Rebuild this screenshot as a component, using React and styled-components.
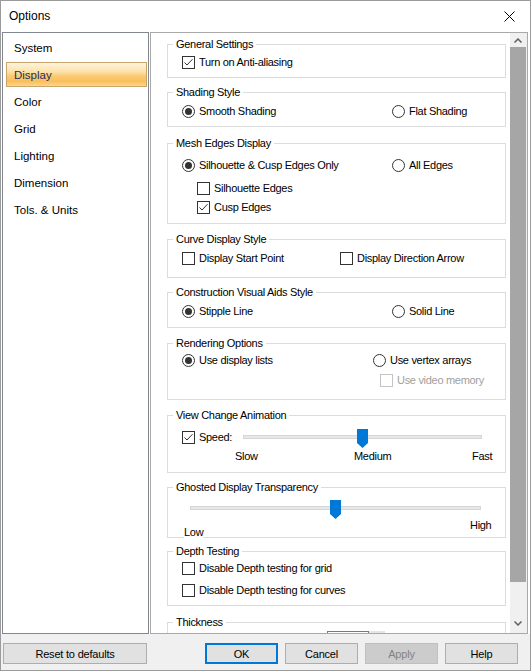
import React from "react";
import styled, { createGlobalStyle } from "styled-components";

const GlobalStyle = createGlobalStyle`
  html, body {
    margin: 0;
    padding: 0;
    background: #ffffff;
  }
  body {
    font-family: "Liberation Sans", Arial, sans-serif;
  }
`;

// whole dialog frame
const Window = styled.div`
  width: 531px;
  height: 671px;
  box-sizing: border-box;
  border: 1px solid #9b9b9b;
  background: #ffffff;
  display: flex;
  flex-direction: column;
  overflow: hidden;
`;

const TitleBar = styled.div`
  height: 30px;
  flex: none;
  display: flex;
  align-items: center;
  justify-content: space-between;
  padding: 0 15px 0 8px;
  font-size: 12px;
  color: #000;
`;

const Body = styled.div`
  height: 603px;
  flex: none;
  display: flex;
  box-sizing: border-box;
  padding: 1px 0 0 1px;
`;

// left category list
const NavList = styled.div`
  width: 147px;
  height: 602px;
  box-sizing: border-box;
  border: 1px solid #828790;
  padding: 2px 0 0 3px;
  display: flex;
  flex-direction: column;
  gap: 2px;
`;

const NavItem = styled.div`
  height: 25px;
  width: 141px;
  box-sizing: border-box;
  display: flex;
  align-items: center;
  padding-left: 7px;
  font-size: 11.5px;
  border: 1px solid ${(p) => (p.$active ? "#c9a46b" : "transparent")};
  color: ${(p) => (p.$active ? "#1b2f5b" : "#000")};
  background: ${(p) =>
    p.$active
      ? "linear-gradient(to bottom, #fff4de 0%, #fde0a6 40%, #fccb74 55%, #fbbf5a 80%, #fdd58e 100%)"
      : "transparent"};
`;

// right scrolling settings panel
const Panel = styled.div`
  margin-left: 1px;
  width: 378px;
  height: 602px;
  box-sizing: border-box;
  border: 1px solid #a9a9a9;
  display: flex;
  overflow: hidden;
`;

const Content = styled.div`
  flex: 1;
  overflow: hidden;
  padding: 0 0 0 16px;
`;

const Group = styled.div`
  position: relative;
  width: 339px;
  height: ${(p) => p.$h}px;
  margin-top: ${(p) => p.$mt}px;
  box-sizing: border-box;
  border: 1px solid #dcdcdc;
  padding: ${(p) => p.$pt}px 0 0 14px;
  font-size: 11px;
  letter-spacing: -0.3px;
  color: #000;
`;

const Legend = styled.div`
  position: absolute;
  top: -7px;
  left: 5px;
  padding: 0 3px;
  background: #fff;
  line-height: 13px;
  font-size: 11px;
`;

const Row = styled.div`
  display: grid;
  grid-template-columns: ${(p) => (p.$c1 ? `${p.$c1}px auto` : "auto")};
  justify-content: start;
  align-items: center;
  margin-top: ${(p) => p.$mt || 0}px;
  margin-left: ${(p) => p.$ml || 0}px;
  height: 13px;
`;

const Option = styled.label`
  display: flex;
  align-items: center;
  gap: 4px;
  line-height: 13px;
  white-space: nowrap;
  color: ${(p) => (p.$disabled ? "#a0a0a0" : "#000")};
`;

const Box = styled.span`
  width: 13px;
  height: 13px;
  box-sizing: border-box;
  border: 1px solid ${(p) => (p.$disabled ? "#c4c4c4" : "#333")};
  background: #fff;
  display: flex;
  align-items: center;
  justify-content: center;
  flex: none;
`;

const Circle = styled.span`
  width: 13px;
  height: 13px;
  box-sizing: border-box;
  border: 1px solid #333;
  border-radius: 50%;
  background: #fff;
  display: flex;
  align-items: center;
  justify-content: center;
  flex: none;
  &::after {
    content: "";
    width: 7px;
    height: 7px;
    border-radius: 50%;
    background: ${(p) => (p.$on ? "#333" : "transparent")};
  }
`;

const Check = ({ on, disabled, children }) => (
  <Option $disabled={disabled}>
    <Box $disabled={disabled}>
      {on && (
        <svg width="11" height="11" viewBox="0 0 11 11">
          <polyline points="1.5,5.5 4,8 9.5,2.2" fill="none" stroke="#333" strokeWidth="1" />
        </svg>
      )}
    </Box>
    {children}
  </Option>
);

const Radio = ({ on, children }) => (
  <Option>
    <Circle $on={on} />
    {children}
  </Option>
);

// slider
const Slider = styled.div`
  position: relative;
  width: ${(p) => p.$w}px;
  height: ${(p) => p.$h}px;
  margin-left: ${(p) => p.$ml || 0}px;
`;

const Track = styled.div`
  position: absolute;
  left: 0;
  right: 0;
  top: ${(p) => p.$top}px;
  height: 4px;
  box-sizing: border-box;
  background: #e7e7e7;
  border: 1px solid #d6d6d6;
`;

const Thumb = styled.svg`
  position: absolute;
  top: ${(p) => p.$top}px;
  left: calc(${(p) => p.$pos}% - 5.5px);
`;

const SliderRow = styled.div`
  display: flex;
  margin-top: ${(p) => p.$mt || 0}px;
`;

const Ticks = styled.div`
  display: grid;
  grid-template-columns: ${(p) => p.$cols};
  align-items: start;
  margin-top: ${(p) => p.$mt || 0}px;
  margin-left: ${(p) => p.$ml || 0}px;
  line-height: 13px;
`;

const Tick = styled.span`
  margin-top: ${(p) => p.$mt || 0}px;
  background: #fff;
  justify-self: start;
`;

const Spin = styled.div`
  display: flex;
  margin-left: 145px;
`;

const SpinField = styled.div`
  width: 42px;
  height: 20px;
  box-sizing: border-box;
  border: 1px solid #7a7a7a;
`;

const SpinBtn = styled.div`
  width: 16px;
  height: 20px;
  background: #e5e5e5;
`;

// scrollbar
const ScrollBar = styled.div`
  width: 17px;
  flex: none;
  background: #f0f0f0;
  display: flex;
  flex-direction: column;
`;

const Arrow = styled.div`
  height: ${(p) => p.$h}px;
  display: flex;
  align-items: center;
  justify-content: center;
  padding-right: 1px;
`;

const ScrollThumb = styled.div`
  height: 535px;
  margin-right: 1px;
  background: #a6a6a6;
`;

const Spacer = styled.div`
  flex: 1;
`;

// bottom buttons
const Footer = styled.div`
  flex: 1;
  background: #f0f0f0;
  display: flex;
  justify-content: space-between;
  align-items: flex-start;
  padding: 9px 12px 0 2px;
`;

const ButtonGroup = styled.div`
  display: flex;
  gap: 7px;
`;

const Button = styled.div`
  width: ${(p) => p.$w || 73}px;
  height: 21px;
  box-sizing: border-box;
  display: flex;
  align-items: center;
  justify-content: center;
  font-size: 11px;
  letter-spacing: -0.2px;
  background: ${(p) => (p.$disabled ? "#cccccc" : "#e1e1e1")};
  border: ${(p) =>
    p.$primary ? "2px solid #0078d7" : p.$disabled ? "1px solid #bfbfbf" : "1px solid #adadad"};
  color: ${(p) => (p.$disabled ? "#838383" : "#000")};
`;

const navItems = ["System", "Display", "Color", "Grid", "Lighting", "Dimension", "Tols. & Units"];

const SliderThumb = ({ pos, top }) => (
  <Thumb $pos={pos} $top={top} width="11" height="19" viewBox="0 0 11 19">
    <polygon points="0,0 11,0 11,14 5.5,19 0,14" fill="#0078d7" />
  </Thumb>
);

export default function App() {
  return (
    <>
      <GlobalStyle />
      <Window>
        <TitleBar>
          <span>Options</span>
          <svg width="11" height="11" viewBox="0 0 11 11">
            <path d="M0.5 0.5 L10.5 10.5 M10.5 0.5 L0.5 10.5" stroke="#000" strokeWidth="1" />
          </svg>
        </TitleBar>
        <Body>
          <NavList>
            {navItems.map((n) => (
              <NavItem key={n} $active={n === "Display"}>
                {n}
              </NavItem>
            ))}
          </NavList>
          <Panel>
            <Content>
              <Group $h={34} $mt={11} $pt={11}>
                <Legend>General Settings</Legend>
                <Row>
                  <Check on>Turn on Anti-aliasing</Check>
                </Row>
              </Group>

              <Group $h={35} $mt={14} $pt={12}>
                <Legend>Shading Style</Legend>
                <Row $c1={210}>
                  <Radio on>Smooth Shading</Radio>
                  <Radio>Flat Shading</Radio>
                </Row>
              </Group>

              <Group $h={81} $mt={16} $pt={15}>
                <Legend>Mesh Edges Display</Legend>
                <Row $c1={210}>
                  <Radio on>Silhouette &amp; Cusp Edges Only</Radio>
                  <Radio>All Edges</Radio>
                </Row>
                <Row $mt={10} $ml={15}>
                  <Check>Silhouette Edges</Check>
                </Row>
                <Row $mt={6} $ml={15}>
                  <Check on>Cusp Edges</Check>
                </Row>
              </Group>

              <Group $h={39} $mt={15} $pt={12}>
                <Legend>Curve Display Style</Legend>
                <Row $c1={158}>
                  <Check>Display Start Point</Check>
                  <Check>Display Direction Arrow</Check>
                </Row>
              </Group>

              <Group $h={36} $mt={14} $pt={12}>
                <Legend>Construction Visual Aids Style</Legend>
                <Row $c1={210}>
                  <Radio on>Stipple Line</Radio>
                  <Radio>Solid Line</Radio>
                </Row>
              </Group>

              <Group $h={57} $mt={15} $pt={10}>
                <Legend>Rendering Options</Legend>
                <Row $c1={191}>
                  <Radio on>Use display lists</Radio>
                  <Radio>Use vertex arrays</Radio>
                </Row>
                <Row $mt={7} $ml={198}>
                  <Check disabled>Use video memory</Check>
                </Row>
              </Group>

              <Group $h={58} $mt={15} $pt={15}>
                <Legend>View Change Animation</Legend>
                <Row $c1={61}>
                  <Check on>Speed:</Check>
                  <Slider $w={239} $h={13}>
                    <Track $top={4} />
                    <SliderThumb pos={50} top={-2} />
                  </Slider>
                </Row>
                <Ticks $cols="119px 118px auto" $mt={6} $ml={53}>
                  <Tick>Slow</Tick>
                  <Tick>Medium</Tick>
                  <Tick>Fast</Tick>
                </Ticks>
              </Group>

              <Group $h={51} $mt={14} $pt={12}>
                <Legend>Ghosted Display Transparency</Legend>
                <SliderRow>
                  <Slider $w={291} $h={19} $ml={8}>
                    <Track $top={6} />
                    <SliderThumb pos={50} top={0} />
                  </Slider>
                </SliderRow>
                <Ticks $cols="286px auto" $ml={2}>
                  <Tick $mt={7}>Low</Tick>
                  <Tick>High</Tick>
                </Ticks>
              </Group>

              <Group $h={55} $mt={13} $pt={10}>
                <Legend>Depth Testing</Legend>
                <Row>
                  <Check>Disable Depth testing for grid</Check>
                </Row>
                <Row $mt={9}>
                  <Check>Disable Depth testing for curves</Check>
                </Row>
              </Group>

              <Group $h={60} $mt={16} $pt={8}>
                <Legend>Thickness</Legend>
                <Spin>
                  <SpinField />
                  <SpinBtn />
                </Spin>
              </Group>
            </Content>
            <ScrollBar>
              <Arrow $h={14}>
                <svg width="8" height="5" viewBox="0 0 8 5">
                  <polyline points="0.5,4.5 4,1 7.5,4.5" fill="none" stroke="#606060" strokeWidth="1.5" />
                </svg>
              </Arrow>
              <ScrollThumb />
              <Spacer />
              <Arrow $h={20}>
                <svg width="8" height="5" viewBox="0 0 8 5">
                  <polyline points="0.5,0.5 4,4 7.5,0.5" fill="none" stroke="#606060" strokeWidth="1.5" />
                </svg>
              </Arrow>
            </ScrollBar>
          </Panel>
        </Body>
        <Footer>
          <Button $w={144}>Reset to defaults</Button>
          <ButtonGroup>
            <Button $primary>OK</Button>
            <Button>Cancel</Button>
            <Button $disabled>Apply</Button>
            <Button>Help</Button>
          </ButtonGroup>
        </Footer>
      </Window>
    </>
  );
}
